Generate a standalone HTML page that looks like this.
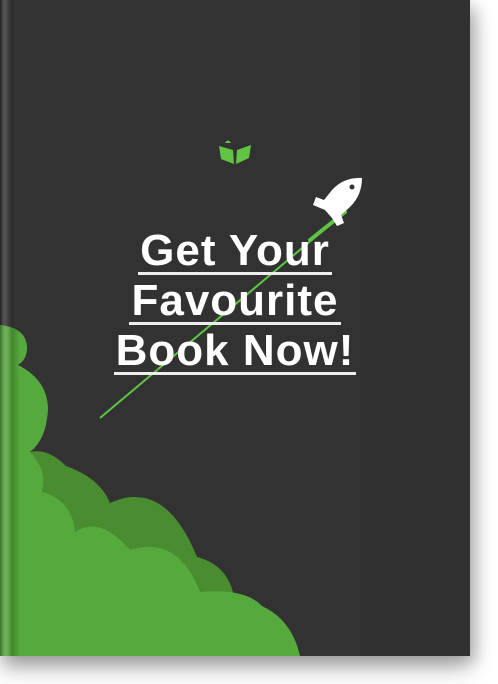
<!DOCTYPE html>
<html><head><style>
html,body{margin:0;padding:0;background:#fff;width:498px;height:684px;overflow:hidden}
.book{position:absolute;left:0;top:0;width:470px;height:656px;background:linear-gradient(90deg,#2c2c2c 0,#3a3a3a 3px,#2b2b2b 8px,#3b3b3b 14px,#333 20px,#313131 100%);box-shadow:0 12px 22px rgba(0,0,0,.28),6px 6px 14px rgba(0,0,0,.2);overflow:hidden}
.t{position:absolute;left:0;width:470px;text-align:center;font:bold 44px "Liberation Sans",sans-serif;color:#fff;letter-spacing:1px}
.t span{display:inline-block;border-bottom:3px solid #eee;padding:0 2px;line-height:42px}
</style></head><body>
<div class="book">
<svg width="470" height="656" style="position:absolute;left:0;top:0">
 <path d="M30,452 Q48,448 66,466 Q100,478 110,503 Q165,478 197,557 Q232,566 235,605 L235,656 L0,656 Z" fill="#4a8d30"/>
 <path d="M0,325 Q28,328 27,350 Q26,360 18,365 Q48,380 48,410 Q46,440 30,452 Q45,468 43,485 L42,492 Q72,500 75,532 Q100,515 130,550 Q178,535 200,592 Q245,588 262,606 Q292,620 300,656 L0,656 Z" fill="#56a93c"/>
 <line x1="100" y1="418" x2="345" y2="212" stroke="#5ec445" stroke-width="2"/>
 <line x1="310" y1="240" x2="345" y2="212" stroke="#5ec445" stroke-width="4" stroke-linecap="round"/>
 <rect x="0" y="0" width="20" height="656" fill="url(#sp)" opacity=".35"/>
 <defs><linearGradient id="sp"><stop offset="0" stop-color="#000"/><stop offset=".3" stop-color="#fff" stop-opacity=".4"/><stop offset=".6" stop-color="#000" stop-opacity=".6"/><stop offset="1" stop-color="#000" stop-opacity="0"/></linearGradient></defs>
 <g fill="#62c443">
  <path d="M219 146 L233 150 L234 164 L221 159 Z"/><path d="M251 145 L237 150 L236 164 L249 158 Z"/>
  <path d="M225 143 Q228 138 231 143 Z"/>
 </g>
 <g fill="#fff">
  <path d="M362 178 Q344 177 332 190 L324 200 L316 197 L313 205 L325 210 L332 218 L337 226 L344 223 L341 215 L350 207 Q362 195 362 178 Z"/>
 </g>
 <circle cx="352" cy="187" r="2.5" fill="#333"/>
</svg>
<div class="t" style="top:226px"><span>Get Your</span></div>
<div class="t" style="top:276px"><span>Favourite</span></div>
<div class="t" style="top:326px"><span>Book Now!</span></div>
</div>
</body></html>
